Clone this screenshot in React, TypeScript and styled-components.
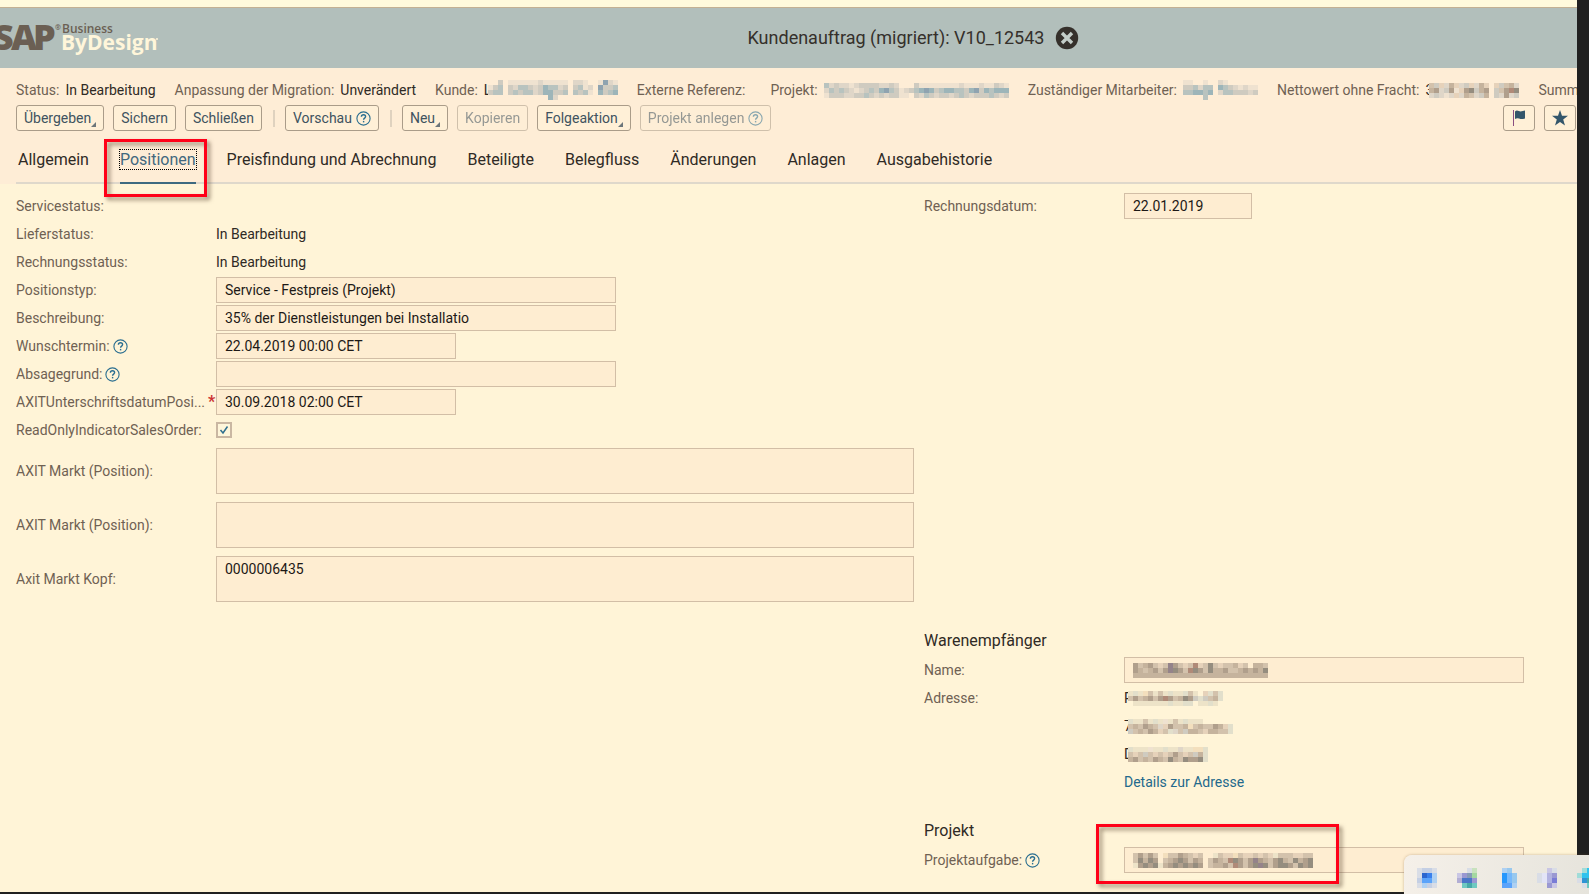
import React from 'react';
import styled, { createGlobalStyle, css } from 'styled-components';

const GlobalStyle = createGlobalStyle`
  *, *::before, *::after { box-sizing: border-box; }
  body {
    margin: 0;
    background: #202020;
    color: #2f2a25;
    font: 14px/20px Roboto, "Liberation Sans", sans-serif;
  }
  input, textarea, button { font: inherit; color: inherit; }
`;

const Screen = styled.div`
  position: relative;
  min-height: 100vh;
  padding: 0 12px 2px 0;
  display: flex;
  flex-direction: column;
  overflow: hidden;
`;

const Page = styled.main`
  flex: 1;
  background: #fff4d7;
`;

const TopStrip = styled.div`
  height: 8px;
  background: #fffadc;
  border-bottom: 1px solid #c3b193;
`;

const Header = styled.header`
  display: flex;
  align-items: center;
  height: 60px;
  background: #b2bfbb;
`;

const LogoCell = styled.div`
  flex: none;
  width: 250px;
  height: 60px;
`;

const TitleCell = styled.div`
  flex: 1;
  display: flex;
  align-items: center;
  justify-content: center;
  gap: 11px;
`;

const Title = styled.h1`
  margin: 0;
  font-size: 18px;
  line-height: 24px;
  font-weight: 400;
  color: #35302b;
`;

const CloseButton = styled.button`
  display: flex;
  padding: 0;
  border: 0;
  background: none;
`;

const ObjectHeader = styled.section`
  padding: 12px 0 0 16px;
  background: #feedd6;
`;

const StatusBar = styled.dl`
  display: flex;
  gap: 19px;
  margin: 0;
  height: 20px;
  white-space: nowrap;
  overflow: hidden;
`;

const StatusItem = styled.div`
  flex: none;
  display: flex;
  gap: 6px;
`;

const StatusLabel = styled.dt`
  color: #6f6153;
`;

const StatusValue = styled.dd`
  display: flex;
  align-items: center;
  margin: 0;
`;

const Toolbar = styled.div`
  display: flex;
  align-items: center;
  gap: 9px;
  margin-top: 5px;
  padding-right: 1px;
`;

const ToolButton = styled.button`
  display: flex;
  align-items: center;
  gap: 4px;
  height: 26px;
  padding: 0 7px;
  border: 1px solid #aa9c89;
  border-radius: 3px;
  background: #fff0d7;
  color: #40535f;
  white-space: nowrap;
  &:disabled { opacity: 0.55; }
`;

const MenuLabel = styled.span`
  display: flex;
  align-items: flex-end;
`;

const IconButton = styled(ToolButton)`
  justify-content: center;
  width: 32px;
  padding: 0;
`;

const Separator = styled.span`
  width: 2px;
  height: 17px;
  margin: 0 1px 0 2px;
  background: #dfd2bf;
`;

const Spacer = styled.span`
  flex: 1;
`;

const Tabs = styled.nav`
  display: flex;
  gap: 31px;
  margin-top: 15px;
  padding-left: 2px;
  height: 38px;
  border-bottom: 2px solid #dfd8cb;
`;

const Tab = styled.a<{ $active?: boolean }>`
  position: relative;
  height: 38px;
  padding-top: 4px;
  font-size: 16px;
  color: #2f2a25;
  text-decoration: none;
  white-space: nowrap;
  ${p => p.$active && css`
    color: #42687e;
    border-bottom: 2px solid #3d6a80;
  `}
`;

const FocusText = styled.span`
  display: block;
  height: 19px;
  outline: 1px dotted #000;
`;

const redMark = css`
  position: absolute;
  border: 3px solid #ff0018;
  filter: drop-shadow(3px 3px 2px rgba(70, 50, 30, 0.55));
  pointer-events: none;
`;

const TabMark = styled.span`
  ${redMark}
  left: -16px;
  right: -11px;
  top: -7px;
  height: 58px;
  z-index: 1;
`;

const FieldMark = styled.span`
  ${redMark}
  left: -28px;
  top: -23px;
  width: 243px;
  height: 60px;
`;

const Columns = styled.div`
  display: grid;
  grid-template-columns: 908px 1fr;
  padding: 9px 0 0 16px;
`;

const Group = styled.section<{ $space?: number }>`
  grid-column: 2;
  padding-top: ${p => p.$space ?? 0}px;
`;

const MainGroup = styled.section`
  grid-column: 1;
`;

const GroupTitle = styled.h2`
  margin: 0 0 4px;
  font-size: 16px;
  line-height: 24px;
  font-weight: 400;
`;

const Row = styled.div`
  display: flex;
  align-items: center;
  height: 26px;
  margin-bottom: 2px;
`;

const TallRow = styled(Row)`
  height: 46px;
  margin-bottom: 8px;
`;

const Notes = styled.div`
  margin-top: 5px;
`;

const Label = styled.label`
  flex: none;
  display: flex;
  align-items: center;
  gap: 3px;
  width: 200px;
  color: #6f6153;
  white-space: nowrap;
`;

const RequiredLabel = styled(Label)`
  gap: 0;
`;

const Ellipsis = styled.span`
  flex: 1;
  overflow: hidden;
  text-overflow: ellipsis;
`;

const Required = styled.span`
  flex: none;
  width: 8px;
  color: #cc3333;
  font-size: 16px;
  font-weight: 700;
`;

const FieldBox = styled.div<{ $width: number }>`
  position: relative;
  width: ${p => p.$width}px;
`;

const fieldLook = css`
  display: block;
  width: 100%;
  border: 1px solid #d2bea6;
  border-radius: 0;
  background: #feedd1;
  color: #1d1916;
  outline: none;
`;

const TextInput = styled.input`
  ${fieldLook}
  height: 26px;
  padding: 0 8px;
`;

const TextArea = styled.textarea`
  ${fieldLook}
  height: 46px;
  padding: 2px 8px;
  resize: none;
`;

const Redacted = styled.span`
  position: absolute;
  left: 9px;
  top: 3px;
  display: flex;
  align-items: center;
  height: 20px;
`;

const Lead = styled.span`
  flex: none;
  width: 4px;
  overflow: hidden;
`;

const CheckWrap = styled.span`
  position: relative;
  display: flex;
`;

const CheckBox = styled.input`
  appearance: none;
  width: 16px;
  height: 16px;
  margin: 0;
  border: 2px solid #cab7a2;
  background: #fff6da;
`;

const CheckMark = styled.svg`
  position: absolute;
  inset: 0;
  pointer-events: none;
`;

const AddressLine = styled.span`
  display: flex;
  align-items: center;
`;

const Link = styled.a`
  color: #23698c;
  text-decoration: none;
`;

const Tray = styled.aside`
  position: absolute;
  right: 0;
  bottom: 0;
  display: flex;
  gap: 20px;
  width: 185px;
  height: 39px;
  padding: 13px 0 0 13px;
  border-radius: 8px 0 0 0;
  background: linear-gradient(100deg, #f5f0e9, #e6e4dc);
  box-shadow: 0 0 3px rgba(120, 90, 50, 0.4);
  overflow: hidden;
`;

const MosaicSvg = styled.svg`
  flex: none;
  display: block;
`;

const colors: Record<string, string> = {
  a: '#efe2d0', b: '#dfd6c8', c: '#cfcbc0', d: '#b8c3bf', e: '#9db5b9', f: '#8fa3b0',
  g: '#e6d2ba', h: '#d3c2ac', i: '#c5b39d', j: '#b09f8c', k: '#958d7f', l: '#b08a78',
  m: '#e2dfcb', n: '#94838a', o: '#f3dfbd', p: '#ede3c8',
  A: '#c4cfe4', B: '#2c66cf', C: '#3a80ec', D: '#5ba3fa', E: '#aed0f2', F: '#d9dde6',
  G: '#9a98d2', H: '#a3d8a0', I: '#4a76c8', J: '#48aaa8', K: '#6fc9c1', L: '#c8e2bd',
  M: '#2597fd', N: '#76b8fb', O: '#98c8ee', P: '#b2b2e0', Q: '#7a7cd6', R: '#c9c6e4',
  S: '#e3e4f6', T: '#2fc3ee', U: '#2f94d4', V: '#a0dcd8', W: '#b2aed4', X: '#879bb6',
};

/* Redacted content: one letter per 5px block, a space leaves the background. */
function Mosaic({ rows }: { rows: string[] }) {
  const width = Math.max(...rows.map(r => r.length)) * 5;
  const height = rows.length * 5;
  return (
    <MosaicSvg width={width} height={height} shapeRendering="crispEdges" aria-hidden="true">
      {rows.flatMap((row, y) =>
        [...row].map((ch, x) =>
          ch === ' ' ? null : (
            <rect key={`${x}-${y}`} x={x * 5} y={y * 5} width={5} height={5} fill={colors[ch]} />
          ),
        ),
      )}
    </MosaicSvg>
  );
}

const masks = {
  customer: [
    '  c aaaaaabaaaaa bba  afba',
    'acd cbddcbceddbc cdab fccd',
    'cdd cdcddbceeccd dcda ecde',
    '            eb            ',
  ],
  project: [
    'dbcbbabccccbbcb   caaaaaaaabaaabaacba',
    'bdcdcbabcdcefdcabcdefecdeeddcefcedeee',
    'acccbbccdcbcbccaa cbdcbccbcdcbcccdcbc',
  ],
  employee: [
    'aa  a  ba      ',
    'ccdbdd edcbabaa',
    'ddeede bddcccbc',
    '    d          ',
  ],
  net: [
    'hcgbigbcgbig gchib',
    'ijbcjagjkcij chjlk',
    'bcbabgbihbci cbjbc',
  ],
  name: [
    'jhijhghnjhghlghkhghhigh iih',
    'jihijhjnkjhlkjhkiijhhijijik',
    'iiiiiiiiiiiiiiiiiiiiiiiiiii',
  ],
  street: [
    'pmpohphpmppmhp gmhm',
    'hjhijhjljhikjcmchim',
    ' pppppppmppmm ppmp ',
  ],
  city: [
    'mpphpmpaphpmppp      ',
    'hihjihbgjhhiohihhjigm',
    'chihjighmbhciihgiihhm',
  ],
  country: [
    'mpppappmppbppoom',
    'hghchghghjhghcim',
    'ijhihjihkihkjjkm',
  ],
  task: [
    'hjhjh ohhjihgh  phggohgghghgphhhgghh',
    'hkikj hijkjhji hjihlkjhjnjihjkihkijk',
    'pjkjkpijkjkjkj hiijhljhjknkhjkkjhkjk',
  ],
};

const trayIcons = [
  ['FAAF', 'FBCE', 'ADDE', 'FEAF'],
  ['  FL', 'RGXH', 'WIIG', ' KJK'],
  [' EO ', ' MNO', ' MNO', ' DDE'],
  ['  RF', 'FSPG', 'FSPQ', '  GR'],
  [' VTV', 'VTTT', 'FUJJ', ' FKK'],
];

function Help() {
  return (
    <svg width="15" height="15" viewBox="0 0 15 15" fill="none" stroke="#2a6e90" role="img" aria-label="Hilfe">
      <circle cx="7.5" cy="7.5" r="6.6" strokeWidth="1.1" />
      <path d="M5.4 5.7c0-2.6 4.2-2.5 4.2-.1 0 1.5-2 1.5-2 3.1" strokeWidth="1.4" />
      <path d="M7.6 9.9v1.5" strokeWidth="1.4" />
    </svg>
  );
}

function Menu({ children }: { children: string }) {
  return (
    <MenuLabel>
      {children}
      <svg width="5" height="17" viewBox="0 0 5 17" aria-hidden="true">
        <path d="M5 11v5H0z" fill="#6d767a" />
      </svg>
    </MenuLabel>
  );
}

function Logo() {
  return (
    <svg width="170" height="60" viewBox="0 0 170 60" role="img" aria-label="SAP Business ByDesign">
      <g fontFamily="Open Sans, sans-serif" fontWeight="700" fill="#6b5f53">
        <g fontSize="36" fontWeight="800">
          <text x="-7" y="42">S</text>
          <text x="11" y="42">A</text>
          <text x="33" y="42">P</text>
        </g>
        <text x="55" y="22" fontSize="7">®</text>
        <text x="62" y="25" fontSize="12" fontWeight="600">Business</text>
        <text x="61" y="42" fontSize="21" fill="#fff6da">ByDesign</text>
      </g>
      <circle cx="157" cy="31" r="1" fill="#fff6da" />
    </svg>
  );
}

interface StatusProps { label: string; children?: React.ReactNode }

function Status({ label, children }: StatusProps) {
  return (
    <StatusItem>
      <StatusLabel>{label}</StatusLabel>
      <StatusValue>{children}</StatusValue>
    </StatusItem>
  );
}

interface FieldProps { id: string; label: string; value?: string; width: number; help?: boolean; children?: React.ReactNode }

function Field({ id, label, value = '', width, help, children }: FieldProps) {
  return (
    <Row>
      <Label htmlFor={id}>{label}{help && <Help />}</Label>
      <FieldBox $width={width}>
        <TextInput id={id} defaultValue={value} />
        {children}
      </FieldBox>
    </Row>
  );
}

function Note({ id, label, value = '' }: { id: string; label: string; value?: string }) {
  return (
    <TallRow>
      <Label htmlFor={id}>{label}</Label>
      <FieldBox $width={698}><TextArea id={id} defaultValue={value} /></FieldBox>
    </TallRow>
  );
}

export default function App() {
  return (
    <Screen>
      <GlobalStyle />
      <TopStrip />
      <Header>
        <LogoCell><Logo /></LogoCell>
        <TitleCell>
          <Title>Kundenauftrag (migriert): V10_12543</Title>
          <CloseButton aria-label="Schließen">
            <svg width="24" height="24" viewBox="0 0 24 24">
              <circle cx="12" cy="12" r="11.2" fill="#35302b" />
              <path d="M7 7l10 10M17 7L7 17" stroke="#c3cdc8" strokeWidth="3.4" />
            </svg>
          </CloseButton>
        </TitleCell>
      </Header>

      <ObjectHeader>
        <StatusBar>
          <Status label="Status:">In Bearbeitung</Status>
          <Status label="Anpassung der Migration:">Unverändert</Status>
          <Status label="Kunde:"><Lead>L</Lead><Mosaic rows={masks.customer} /></Status>
          <Status label="Externe Referenz:" />
          <Status label="Projekt:"><Mosaic rows={masks.project} /></Status>
          <Status label="Zuständiger Mitarbeiter:"><Mosaic rows={masks.employee} /></Status>
          <Status label="Nettowert ohne Fracht:"><Lead>3</Lead><Mosaic rows={masks.net} /></Status>
          <Status label="Summ" />
        </StatusBar>
        <Toolbar>
          <ToolButton><Menu>Übergeben</Menu></ToolButton>
          <ToolButton>Sichern</ToolButton>
          <ToolButton>Schließen</ToolButton>
          <Separator />
          <ToolButton>Vorschau<Help /></ToolButton>
          <Separator />
          <ToolButton><Menu>Neu</Menu></ToolButton>
          <ToolButton disabled>Kopieren</ToolButton>
          <ToolButton><Menu>Folgeaktion</Menu></ToolButton>
          <ToolButton disabled>Projekt anlegen<Help /></ToolButton>
          <Spacer />
          <IconButton aria-label="Kennzeichnen">
            <svg width="14" height="18" viewBox="0 0 14 18">
              <path d="M1.5 1v16" stroke="#8a4d80" />
              <path d="M3 2.5c2-2 4 0 5.500 0S11.500 1.500 13 1.500v8c-2 .3-3 .9-4.500.4S5 8.500 3 10z" fill="#34566b" />
            </svg>
          </IconButton>
          <IconButton aria-label="Favorit">
            <svg width="18" height="18" viewBox="0 0 18 18">
              <path d="M9 1l2 5.800h6l-4.800 3.600L14 16.500 9 12.900 4 16.500l1.800-6.100L1 6.800h6z" fill="#34566b" />
            </svg>
          </IconButton>
        </Toolbar>
        <Tabs>
          <Tab href="#allgemein">Allgemein</Tab>
          <Tab href="#positionen" $active><FocusText>Positionen</FocusText><TabMark /></Tab>
          <Tab href="#preise">Preisfindung und Abrechnung</Tab>
          <Tab href="#beteiligte">Beteiligte</Tab>
          <Tab href="#belegfluss">Belegfluss</Tab>
          <Tab href="#aenderungen">Änderungen</Tab>
          <Tab href="#anlagen">Anlagen</Tab>
          <Tab href="#ausgabe">Ausgabehistorie</Tab>
        </Tabs>
      </ObjectHeader>

      <Page>
        <Columns>
          <MainGroup>
            <Row><Label as="span">Servicestatus:</Label></Row>
            <Row><Label as="span">Lieferstatus:</Label>In Bearbeitung</Row>
            <Row><Label as="span">Rechnungsstatus:</Label>In Bearbeitung</Row>
            <Field id="typ" label="Positionstyp:" value="Service - Festpreis (Projekt)" width={400} />
            <Field id="beschreibung" label="Beschreibung:" value="35% der Dienstleistungen bei Installatio" width={400} />
            <Field id="wunschtermin" label="Wunschtermin:" value="22.04.2019 00:00 CET" width={240} help />
            <Field id="absagegrund" label="Absagegrund:" width={400} help />
            <Row>
              <RequiredLabel htmlFor="unterschrift">
                <Ellipsis>AXITUnterschriftsdatumPosi...</Ellipsis>
                <Required>*</Required>
              </RequiredLabel>
              <FieldBox $width={240}><TextInput id="unterschrift" defaultValue="30.09.2018 02:00 CET" /></FieldBox>
            </Row>
            <Row>
              <Label htmlFor="readonly">ReadOnlyIndicatorSalesOrder:</Label>
              <CheckWrap>
                <CheckBox type="checkbox" id="readonly" defaultChecked />
                <CheckMark width="16" height="16" viewBox="0 0 16 16" fill="none" stroke="#2f6f8e" strokeWidth="1.5">
                  <path d="M4.500 8l2.500 3 4.500-6.500" />
                </CheckMark>
              </CheckWrap>
            </Row>
            <Notes>
              <Note id="markt1" label="AXIT Markt (Position):" />
              <Note id="markt2" label="AXIT Markt (Position):" />
              <Note id="kopf" label="Axit Markt Kopf:" value="0000006435" />
            </Notes>
          </MainGroup>

          <Group>
            <Field id="rechnungsdatum" label="Rechnungsdatum:" value="22.01.2019" width={128} />
          </Group>

          <Group $space={19}>
            <GroupTitle>Warenempfänger</GroupTitle>
            <Field id="name" label="Name:" width={400}>
              <Redacted><Mosaic rows={masks.name} /></Redacted>
            </Field>
            <Row><Label as="span">Adresse:</Label><AddressLine><Lead>P</Lead><Mosaic rows={masks.street} /></AddressLine></Row>
            <Row><Label as="span" /><AddressLine><Lead>7</Lead><Mosaic rows={masks.city} /></AddressLine></Row>
            <Row><Label as="span" /><AddressLine><Lead>D</Lead><Mosaic rows={masks.country} /></AddressLine></Row>
            <Row><Label as="span" /><Link href="#adresse">Details zur Adresse</Link></Row>
          </Group>

          <Group $space={22}>
            <GroupTitle>Projekt</GroupTitle>
            <Field id="aufgabe" label="Projektaufgabe:" width={400} help>
              <Redacted><Mosaic rows={masks.task} /></Redacted>
              <FieldMark />
            </Field>
          </Group>
        </Columns>
      </Page>

      <Tray>
        {trayIcons.map((rows, i) => <Mosaic key={i} rows={rows} />)}
      </Tray>
    </Screen>
  );
}
